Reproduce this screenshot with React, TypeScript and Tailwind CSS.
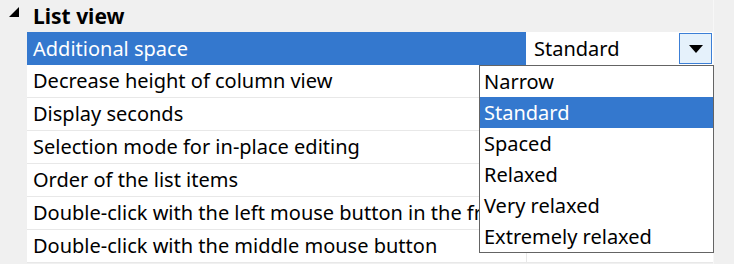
import React from 'react';

const rows = [
  'Decrease height of column view',
  'Display seconds',
  'Selection mode for in-place editing',
  'Order of the list items',
  'Double-click with the left mouse button in the free area',
  'Double-click with the middle mouse button',
];

const options = ['Narrow', 'Standard', 'Spaced', 'Relaxed', 'Very relaxed', 'Extremely relaxed'];

export default function App() {
  return (
    <div
      className="relative w-[734px] h-[264px] bg-[#f0f0f0] flex overflow-hidden text-[20px] text-black"
      style={{ fontFamily: '"Noto Sans", "Open Sans", sans-serif' }}
    >
      <div className="w-[714px] flex flex-col border-r border-[#f7f7f7]">
        {/* Category header */}
        <div className="h-[32px] flex items-center shrink-0">
          <svg width="27" height="32" viewBox="0 0 27 32" className="shrink-0">
            <polygon points="19,7 19,17 9,17" fill="#000" />
          </svg>
          <span className="pl-[6px] font-bold text-[21px] leading-none">List view</span>
        </div>

        {/* Selected row */}
        <div className="h-[33px] flex shrink-0">
          <div className="w-[27px] shrink-0" />
          <div className="w-[499px] shrink-0 bg-[#3478ce] text-white flex items-center pl-[6px] leading-none">
            Additional space
          </div>
          <div className="flex-1 bg-white flex items-center pl-[8px] pr-[1px] leading-none">
            <span className="flex-1">Standard</span>
            <div className="w-[33px] h-[31px] border border-[#3c7fd6] bg-[#e5f1fb] flex items-center justify-center">
              <svg width="14" height="8" viewBox="0 0 14 8">
                <polygon points="0,0 14,0 7,8" fill="#000" />
              </svg>
            </div>
          </div>
        </div>

        {rows.map((r, i) => (
          <div key={r} className="h-[33px] flex shrink-0">
            <div className="w-[27px] shrink-0" />
            <div className="w-[499px] shrink-0 bg-white border-b border-[#e8e8e8] flex items-center pl-[6px] leading-none whitespace-nowrap overflow-hidden">
              {r}
            </div>
            <div className="flex-1 bg-white border-b border-l border-[#e8e8e8] flex items-center pl-[8px] leading-none whitespace-nowrap">
              {i === rows.length - 1 ? 'No action' : ''}
            </div>
          </div>
        ))}
      </div>
      <div className="flex-1" />

      {/* Open dropdown list */}
      <div className="absolute left-[479px] top-[65px] w-[235px] h-[188px] bg-white border border-[#646464] flex flex-col">
        {options.map((o) => (
          <div
            key={o}
            className={`h-[31px] flex items-center pl-[4px] leading-none ${
              o === 'Standard' ? 'bg-[#3478ce] text-white' : ''
            }`}
          >
            {o}
          </div>
        ))}
      </div>
    </div>
  );
}
